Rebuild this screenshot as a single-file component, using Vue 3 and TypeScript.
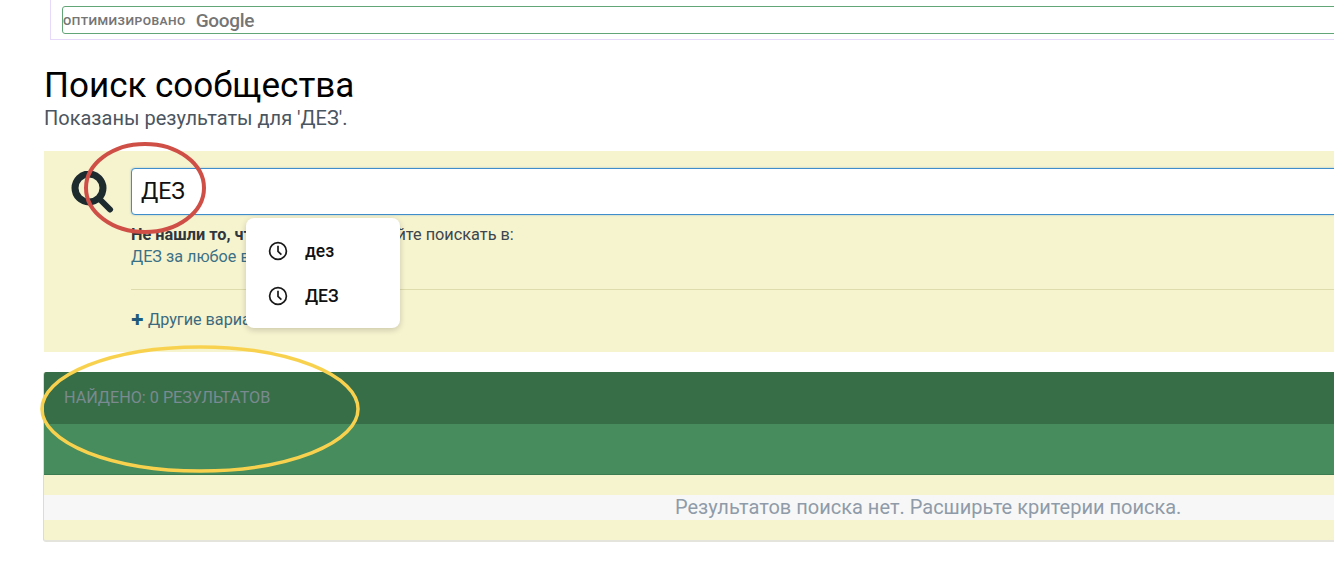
<script setup lang="ts">
const history: string[] = ['дез', 'ДЕЗ']
</script>

<template>
  <div class="page">
    <div class="top-frame">
      <div class="google-box">
        <span class="opt">оптимизировано</span>
        <span class="google">Google</span>
      </div>
    </div>

    <div class="content">
      <h1 class="title">Поиск сообщества</h1>
      <p class="subtitle">Показаны результаты для 'ДЕЗ'.</p>

      <section class="search">
        <svg class="search-icon" viewBox="0 0 44 44" width="44" height="44" aria-hidden="true">
          <circle cx="19" cy="17" r="14" fill="none" stroke="#1d2a2e" stroke-width="7" />
          <path d="M30 28.5 L40 38.5" fill="none" stroke="#1d2a2e" stroke-width="6" stroke-linecap="round" />
        </svg>
        <div class="search-main">
          <div class="input">ДЕЗ</div>
          <p class="hint"><b>Не нашли то, что искали?</b> Попробуйте поискать в:</p>
          <a class="link">ДЕЗ за любое время</a>
          <hr class="rule" />
          <a class="more"><span class="plus">✚</span> Другие варианты</a>
        </div>
      </section>

      <section class="results">
        <div class="results-head">НАЙДЕНО: 0 РЕЗУЛЬТАТОВ</div>
        <div class="results-bar"></div>
        <div class="results-body">
          <div class="empty">Результатов поиска нет. Расширьте критерии поиска.</div>
        </div>
      </section>
    </div>

    <div class="popup">
      <div v-for="item in history" :key="item" class="popup-row">
        <svg viewBox="0 0 20 20" width="20" height="20" aria-hidden="true">
          <circle cx="10" cy="10" r="8.4" fill="none" stroke="#1a1a1a" stroke-width="1.7" />
          <path d="M10 4.8 V10.4 L13.4 13.6" fill="none" stroke="#1a1a1a" stroke-width="1.7" />
        </svg>
        <span>{{ item }}</span>
      </div>
    </div>

    <svg class="marks" width="1334" height="586" viewBox="0 0 1334 586" aria-hidden="true">
      <ellipse cx="145" cy="188" rx="59" ry="44" fill="none" stroke="#cf4f47" stroke-width="4" />
      <ellipse cx="200" cy="409" rx="158" ry="62" fill="none" stroke="#f8d24f" stroke-width="3.5" />
    </svg>
  </div>
</template>

<style scoped>
.page {
  position: relative;
  width: 1334px;
  height: 586px;
  overflow: hidden;
  background: #fff;
  font-family: Roboto, "Liberation Sans", sans-serif;
}
.top-frame {
  box-sizing: border-box;
  height: 40px;
  margin-left: 50px;
  margin-right: -20px;
  padding: 6px 0 0 11px;
  border-left: 1px solid #e6d9fa;
  border-bottom: 1px solid #e6d9fa;
}
.google-box {
  box-sizing: border-box;
  height: 28px;
  display: flex;
  align-items: center;
  gap: 10px;
  border: 1px solid #62a678;
  border-radius: 3px;
}
.opt {
  font-size: 14px;
  font-weight: 500;
  text-transform: lowercase;
  font-variant: small-caps;
  line-height: 1;
  letter-spacing: 0.45px;
  color: #757575;
}
.google {
  font-size: 19px;
  font-weight: 500;
  letter-spacing: -0.3px;
  color: #757575;
}
.content {
  padding-left: 44px;
}
.title {
  margin: 27px 0 0;
  font-size: 35px;
  line-height: 38px;
  font-weight: 400;
  color: #000;
}
.subtitle {
  margin: 1px 0 0;
  font-size: 20px;
  line-height: 24px;
  color: #4b5560;
}
.search {
  box-sizing: border-box;
  height: 201px;
  margin-top: 21px;
  padding: 17px 0 0 26px;
  display: flex;
  gap: 17px;
  background: #f6f3cf;
}
.search-icon {
  flex: none;
  margin-top: 3px;
}
.search-main {
  flex: 1;
  min-width: 0;
  margin-right: -20px;
}
.input {
  box-sizing: border-box;
  height: 47px;
  padding-left: 9px;
  line-height: 45px;
  font-size: 23px;
  color: #111;
  background: #fff;
  border: 1px solid #3f8ecb;
  border-radius: 4px 0 0 4px;
  box-shadow: 0 0 2px rgba(63, 142, 203, 0.5);
}
.hint {
  margin: 10px 0 0;
  font-size: 16.3px;
  line-height: 20px;
  color: #3d464d;
}
.hint b {
  font-weight: 700;
  color: #2f373d;
}
.link {
  display: block;
  font-size: 16.2px;
  line-height: 24px;
  color: #3b7186;
}
.rule {
  height: 1px;
  margin: 20px 0 0;
  border: 0;
  background: #dedbac;
}
.more {
  display: block;
  margin-top: 20px;
  font-size: 16.2px;
  line-height: 20px;
  color: #3b6a7e;
}
.plus {
  font-size: 15px;
  color: #1f5a7a;
}
.results {
  box-sizing: border-box;
  height: 170px;
  margin-top: 20px;
  margin-left: -1px;
  border-left: 1px solid #dcdcd4;
  border-bottom: 2px solid #e4e4dc;
  border-radius: 3px 0 0 3px;
  background: #f6f3cf;
  overflow: hidden;
}
.results-head {
  box-sizing: border-box;
  height: 52px;
  padding-left: 20px;
  font-size: 16.2px;
  line-height: 51px;
  color: #7a8a90;
  background: #376e48;
}
.results-bar {
  height: 51px;
  background: #468c5c;
  border-bottom: 1px solid #3b7d50;
  box-sizing: border-box;
}
.results-body {
  padding-top: 20px;
}
.empty {
  height: 25px;
  padding-left: 631px;
  font-size: 20px;
  line-height: 25px;
  color: #8f9ba8;
  background: #f7f7f7;
  white-space: nowrap;
}
.popup {
  position: absolute;
  left: 246px;
  top: 218px;
  box-sizing: border-box;
  width: 154px;
  height: 110px;
  padding-top: 11px;
  background: #fff;
  border-radius: 8px;
  box-shadow: 0 2px 6px rgba(0, 0, 0, 0.18);
}
.popup-row {
  display: flex;
  align-items: center;
  gap: 17px;
  height: 44.5px;
  padding-left: 22px;
  font-size: 17.5px;
  font-weight: 500;
  color: #111;
}
.popup-row svg {
  flex: none;
}
.marks {
  position: absolute;
  left: 0;
  top: 0;
  pointer-events: none;
}
</style>
